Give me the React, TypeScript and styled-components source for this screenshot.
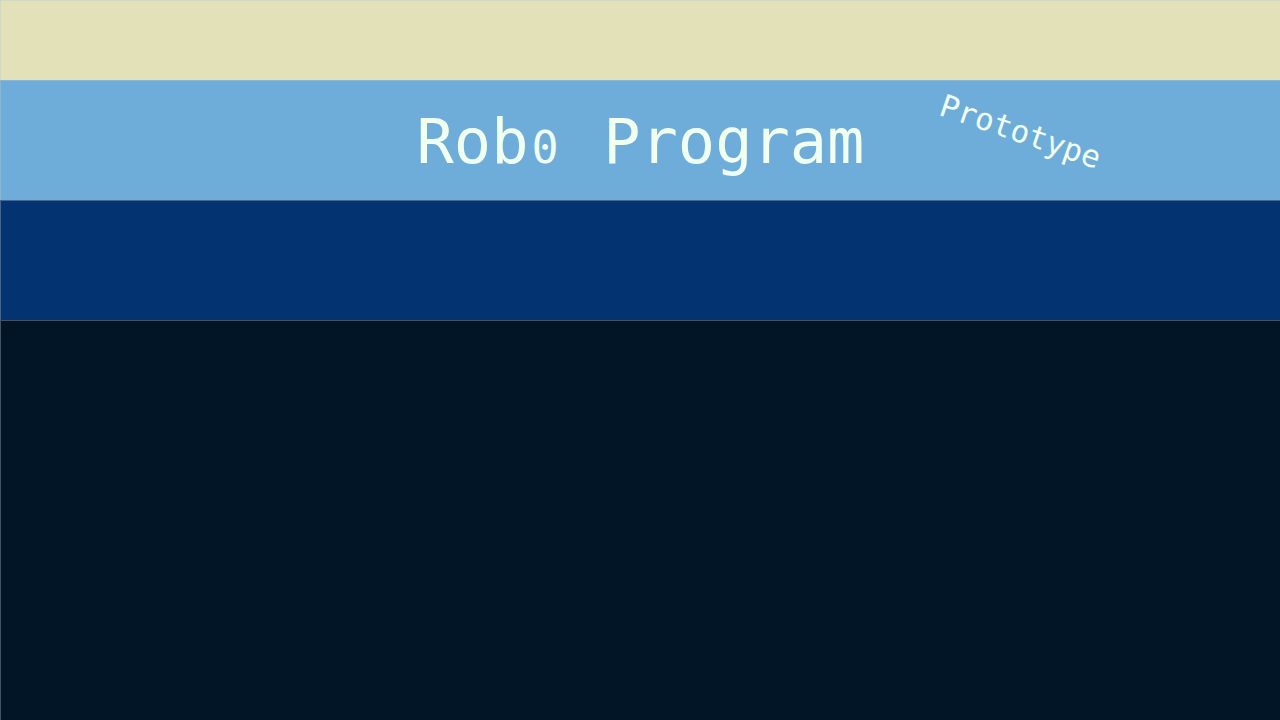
import styled, { createGlobalStyle } from 'styled-components'

const Global = createGlobalStyle`
  html, body {
    margin: 0;
    padding: 0;
    background: #011527;
  }
  body {
    font-family: "DejaVu Sans Mono", monospace;
  }
`

const Page = styled.div`
  width: 1280px;
  height: 720px;
  display: flex;
  flex-direction: column;
  overflow: hidden;
`

const Band = styled.div<{ bg: string; h: number }>`
  box-sizing: border-box;
  height: ${({ h }) => h}px;
  flex-shrink: 0;
  background: ${({ bg }) => bg};
  border-top: 1px solid rgba(190, 200, 210, 0.35);
  border-left: 1px solid rgba(190, 200, 210, 0.35);
`

const Header = styled(Band)`
  position: relative;
  display: flex;
  align-items: center;
  justify-content: center;
`

const Title = styled.h1`
  margin: 0;
  font-family: "DejaVu Sans Mono", monospace;
  font-weight: normal;
  font-size: 62px;
  line-height: 1;
  color: honeydew;
  margin-top: 2px;
  white-space: pre;
`

// the zero sits a little under cap height, but keeps a full cell
const SmallZero = styled.span`
  font-size: 45px;
  letter-spacing: 7.2px;
  margin-left: 3px;
`

const Stamp = styled.span`
  position: absolute;
  left: 946px;
  top: 6px;
  font-family: "DejaVu Sans Mono", monospace;
  font-size: 31px;
  color: honeydew;
  transform: rotate(19deg);
  transform-origin: left top;
`

const Rest = styled(Band)`
  flex: 1;
`

export default function App() {
  return (
    <>
      <Global />
      <Page>
        <Band bg="#e2e1b7" h={80} />
        <Header bg="#6eacd9" h={120}>
          <Title>
            Rob<SmallZero>0</SmallZero> Program
          </Title>
          <Stamp>Prototype</Stamp>
        </Header>
        <Band bg="#033471" h={120} />
        <Rest bg="#011527" h={400} />
      </Page>
    </>
  )
}
